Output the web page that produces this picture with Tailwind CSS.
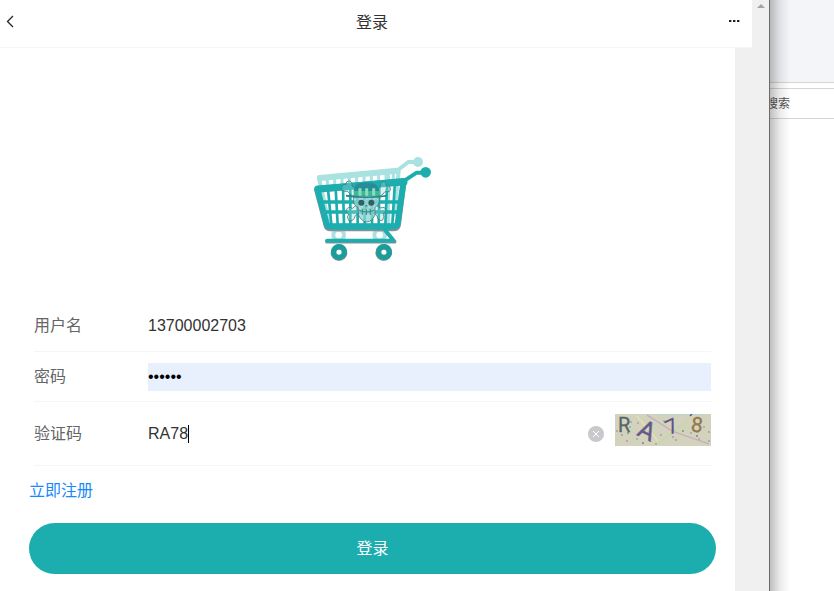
<!DOCTYPE html>
<html lang="zh-CN">
<head>
<meta charset="utf-8">
<meta name="viewport" content="width=device-width, initial-scale=1">
<title>登录</title>
<script src="https://cdn.jsdelivr.net/npm/@tailwindcss/browser@4"></script>
</head>
<body class="flex min-h-screen overflow-hidden bg-white text-base text-[#323233] font-['Liberation_Sans','Noto_Sans_CJK_SC',sans-serif]">

<div class="relative z-10 flex min-w-0 flex-1 border-r border-[#6b6b6b] bg-white">
  <div class="flex min-w-0 flex-1 flex-col">
    <header class="flex h-12 shrink-0 items-center justify-between border-b border-[#f5f5f5] pr-3 pb-0.5 pl-1">
      <button type="button" aria-label="返回" class="flex h-6 w-3 items-center">
        <svg class="h-4 w-3" viewBox="0 0 12 16" fill="none" stroke="#222" stroke-width="1.3"><path d="M9 1 3.5 6.5 9 12"/></svg>
      </button>
      <h1 class="text-base leading-6">登录</h1>
      <button type="button" aria-label="更多" class="flex h-6 items-center">
        <svg class="h-4 w-3" viewBox="0 0 12 16" fill="#222"><rect x="1" y="5" width="2.4" height="2"/><rect x="5" y="5" width="2.4" height="2"/><rect x="9" y="5" width="2.4" height="2"/></svg>
      </button>
    </header>

    <div class="flex-1 bg-[#f0f0f0] pr-[17px]">
      <main class="min-h-full bg-white pr-[19px] pl-[29px]">
        <div class="flex justify-center pt-[97px] pb-[31px]">
          <svg class="h-[125px] w-[145px]" viewBox="0 0 435 375" role="img" aria-label="购物车">
            <!-- rear basket -->
            <g fill="none" stroke="#a9e2e0" stroke-linecap="round" stroke-linejoin="round">
              <path d="M59 99 292 77" stroke-width="18"/>
              <path d="M294 75 325 51H348" stroke-width="12"/>
              <path d="M57 100 88 240M296 80 282 210M264 90V240" stroke-width="12"/>
            </g>
            <circle cx="354" cy="51" r="15" fill="#a9e2e0"/>
            <g fill="none" stroke="#a9e2e0" stroke-width="12"><circle cx="116" cy="270" r="16"/><circle cx="239" cy="270" r="16"/></g>
            <path d="M82 100V125M104 98V125M126 96V125M148 94V120M170 92V120M192 90V120M214 88V120M236 86V120M258 84V120M280 82V120" stroke="#a9e2e0" stroke-width="9"/>
            <!-- front basket -->
            <path d="M51 133 79 239Q81 248 91 248H280Q292 248 294 239L311 108Z" fill="none" stroke="#8d8f98" stroke-width="17" stroke-linejoin="round" transform="translate(0 2)"/>
            <g fill="none" stroke="#1caeae" stroke-linejoin="round" stroke-linecap="round">
              <path d="M52 132 80 237Q82 245 91 245H280Q291 245 293 236L311 108Z" stroke-width="18"/>
              <path d="M54 132 312 111" stroke-width="21"/>
              <path d="M310 109 350 83H372" stroke-width="12"/>
              <path d="M64 171H302M73 201H296" stroke-width="10"/>
              <path d="M84 132 94 238M107 130 113 238M129 130 132 238M151 130V238M173 130V238M194 130V238M216 130V238M238 130 236 238M261 128 256 238M284 125 277 238" stroke-width="8"/>
              <path d="M80 241H292" stroke-width="12"/>
            </g>
            <circle cx="377" cy="82" r="16" fill="#1caeae"/>
            <!-- lower frame and wheels -->
            <path d="M81 290H284L253 254" fill="none" stroke="#8d8f98" stroke-width="11" stroke-linecap="round" stroke-linejoin="round"/>
            <path d="M81 287H281L253 252" fill="none" stroke="#1caeae" stroke-width="11" stroke-linecap="round" stroke-linejoin="round"/>
            <g fill="none" stroke="#8d8f98" stroke-width="16"><circle cx="117" cy="323" r="17"/><circle cx="251" cy="323" r="17"/></g>
            <g fill="none" stroke="#1b9e9b" stroke-width="16"><circle cx="117" cy="321" r="16"/><circle cx="252" cy="321" r="16"/></g>
            <!-- skull and crossbones -->
            <g fill="#94d8d5" fill-opacity=".35" stroke="#457d83" stroke-width="2.5" stroke-linejoin="round">
              <path d="M143 139Q124 141 125 127Q128 116 138 119Q137 108 147 108Q158 110 156 123L240 189Q256 183 258 196Q258 204 249 206Q256 216 247 226Q233 229 231 212L149 146Z"/>
              <path d="M255 140Q274 143 271 129Q267 120 258 122Q259 108 249 110Q239 113 242 125L157 190Q142 183 139 196Q139 204 146 207Q139 215 146 227Q161 231 166 212L249 147Z"/>
              <path d="M161 151Q156 180 174 187L175 210Q186 231 201 231Q215 230 225 210L225 187Q243 177 237 151Z" fill="#8dd5d2" fill-opacity=".75"/>
              <path d="M176 195Q200 207 223 195M187 191V210M199 191V210M211 191V210" fill="none" stroke="#347c82"/>
            </g>
            <path d="M161 141Q161 116 184 113Q199 110 217 114Q238 120 238 141Z" fill="#278e99"/>
            <path d="M161 138H239V151H161Z" fill="#39bc94"/>
            <path d="M180 130V152M200 130V152M221 130V152" stroke="#8bdcb8" stroke-width="9"/>
            <path d="M137 149Q200 159 261 150L258 155Q198 163 139 155Z" fill="#24858c"/>
            <circle cx="184" cy="173" r="9" fill="#315f68"/><circle cx="214" cy="173" r="9" fill="#315f68"/>
            <path d="M195 184 199 179 203 184Z" fill="#315f68"/>
          </svg>
        </div>

        <form>
          <div class="pr-[5px] pl-[5px]">
            <div class="flex h-[51px] items-center border-b border-[#f5f5f5]">
              <label for="username" class="w-[114px] shrink-0 text-[#646566]">用户名</label>
              <input id="username" type="text" value="13700002703" class="h-7 min-w-0 flex-1 bg-transparent outline-none">
            </div>
            <div class="flex h-[50px] items-center border-b border-[#f5f5f5]">
              <label for="password" class="w-[114px] shrink-0 text-[#646566]">密码</label>
              <input id="password" type="password" value="123456" class="h-7 min-w-0 flex-1 bg-[#e8f0fe] text-black outline-none">
            </div>
            <div class="flex h-16 items-center border-b border-[#f5f5f5]">
              <label for="captcha" class="w-[114px] shrink-0 text-[#646566]">验证码</label>
              <div class="relative flex min-w-0 flex-1 items-center">
                <input id="captcha" type="text" value="RA78" class="h-7 min-w-0 flex-1 bg-transparent outline-none">
                <span class="absolute left-10 h-[18px] w-px bg-black"></span>
              </div>
              <button type="button" aria-label="清除" class="mr-[11px] h-4 w-4 rounded-full bg-[#c8c9cc]">
                <svg class="h-4 w-4" viewBox="0 0 16 16" fill="none" stroke="#fff" stroke-width="1"><path d="m5 5 6 6M11 5l-6 6"/></svg>
              </button>
              <button type="button" aria-label="刷新验证码" class="mt-3 h-8 w-24 self-start">
                <svg class="h-8 w-24 bg-[#d3d3bd] font-['Roboto']" viewBox="0 0 96 32">
                  <g stroke-width="1.2" fill="none"><path d="M22 2 43 27" stroke="#e4e3ae"/><path d="M32 1 57 17 94 30" stroke="#c3a8bf"/><path d="M43 30 73 6" stroke="#bedba5"/><path d="M36 1H91" stroke="#bdd5d4"/></g>
                  <g fill="#8b7899"><circle cx="16" cy="8" r=".8"/><circle cx="2" cy="17" r=".8"/><circle cx="7" cy="21" r=".8"/><circle cx="12" cy="27" r=".8"/><circle cx="28" cy="29" r="1"/><circle cx="46" cy="21" r=".8"/><circle cx="58" cy="23" r=".8"/><circle cx="61" cy="26" r=".8"/><circle cx="76" cy="19" r=".8"/><circle cx="82" cy="22" r="1"/><circle cx="94" cy="18" r=".8"/><circle cx="94" cy="27" r=".8"/></g>
                  <g fill="#729873"><circle cx="15" cy="13" r=".8"/><circle cx="13" cy="19" r="1"/><circle cx="23" cy="9" r=".8"/><circle cx="22" cy="25" r=".8"/><circle cx="41" cy="30" r=".8"/><circle cx="49" cy="7" r=".8"/><circle cx="68" cy="17" r="1"/><circle cx="89" cy="13" r=".8"/><circle cx="84" cy="25" r=".8"/></g>
                  <path d="m75 2 2-2" stroke="#5d528c" stroke-width="1.5"/>
                  <text x="3" y="18" font-size="20" fill="#58646a" stroke="#58646a" stroke-width=".3">R</text>
                  <text x="24" y="25" font-size="25" fill="#655a8c" stroke="#655a8c" stroke-width=".5" transform="rotate(25 32 16)">A</text>
                  <text x="51" y="19" font-size="20" fill="#5d528c" stroke="#5d528c" stroke-width=".3" transform="rotate(-25 57 12)">7</text>
                  <text x="76" y="18" font-size="21" fill="#937850" stroke="#937850" stroke-width=".3" transform="rotate(7 81 11)">8</text>
                </svg>
              </button>
            </div>
          </div>
          <a href="#" class="mt-[13px] block w-fit leading-6 text-[#1989fa]">立即注册</a>
          <button type="submit" class="mt-5 block h-[51px] w-full rounded-full bg-[#1caeae] text-white">登录</button>
        </form>
      </main>
    </div>
  </div>
  <div class="flex w-[17px] shrink-0 justify-center bg-[#f0f0f0] pt-1">
    <svg class="h-1 w-2" viewBox="0 0 8 4" fill="#a3a3a3"><path d="M0 4 4 0l4 4Z"/></svg>
  </div>
</div>

<aside class="relative w-16 shrink-0 bg-white">
  <div class="h-[83px] border-b border-[#d4d6d6] bg-[#f3f5f8]"></div>
  <div class="mt-[5px] flex h-[31px] items-center border-y border-[#d4d6d6] text-xs text-[#555]"><span class="-ml-1">搜索</span></div>
  <div class="absolute inset-y-0 left-0 w-5 bg-linear-to-r from-black/25 via-black/8 to-transparent"></div>
</aside>
</body>
</html>
